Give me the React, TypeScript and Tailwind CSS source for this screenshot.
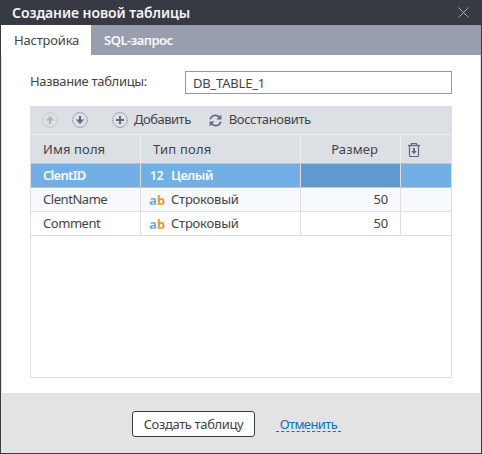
import React from "react";

type RowData = { name: string; type: string; size: string };

const rows: RowData[] = [
  { name: "ClentName", type: "Строковый", size: "50" },
  { name: "Comment", type: "Строковый", size: "50" },
];

function Arrow({ color, down }: { color: string; down?: boolean }) {
  return (
    <svg width="16" height="16" viewBox="0 0 16 16" fill="none" className="shrink-0">
      <circle cx="8" cy="8" r="7.4" stroke={color} strokeDasharray="1 1" />
      <g transform={down ? "rotate(180 8 8)" : undefined}>
        <path d="M8 12V6" stroke={color} strokeWidth="2" />
        <path d="M8 3.8L12 8.5H4Z" fill={color} />
      </g>
    </svg>
  );
}

function Plus() {
  return (
    <svg width="16" height="16" viewBox="0 0 16 16" fill="none" stroke="#5d6a80" className="shrink-0">
      <circle cx="8" cy="8" r="7.4" strokeDasharray="1 1" />
      <path d="M8 4V12M4 8H12" strokeWidth="2" />
    </svg>
  );
}

function Refresh() {
  return (
    <svg width="13" height="13" viewBox="0 0 13 13" fill="none" stroke="#5d6a80" strokeWidth="1.7" className="shrink-0">
      <path d="M1.2 5.2C2.3 1 7.5.3 10.4 3.2" />
      <path d="M12.4 .5V5.5H7.4Z" fill="#5d6a80" stroke="none" />
      <path d="M11.8 7.8C10.7 12 5.5 12.7 2.6 9.8" />
      <path d="M.6 12.5V7.5H5.6Z" fill="#5d6a80" stroke="none" />
    </svg>
  );
}

function Trash() {
  return (
    <svg width="12" height="14" viewBox="0 0 12 14" fill="none" stroke="#5d6a80">
      <path d="M0 2.5H12" strokeWidth="1.4" />
      <path d="M3.5 2V.5H8.5V2M1.5 3V12.5Q1.5 13.5 2.5 13.5H9.5Q10.5 13.5 10.5 12.5V3" strokeWidth="1.2" />
      <path d="M6 5V9" strokeWidth="2" />
      <path d="M3.3 8H8.7L6 11.3Z" fill="#5d6a80" stroke="none" />
    </svg>
  );
}

export default function App() {
  return (
    <div className="flex h-[454px] w-[482px] flex-col whitespace-nowrap border-x border-b border-[#393a44] bg-white font-['Noto_Sans',sans-serif] text-[13px] leading-[18px] text-[#434446]">
      <header className="flex h-[25px] shrink-0 items-center justify-between bg-[#383a43] pl-[11px] pr-[12px] text-[#f4f4f5]">
        <h1 className="text-[14px] font-semibold tracking-[-0.08px]">Создание новой таблицы</h1>
        <svg width="11" height="11" viewBox="0 0 11 11" stroke="#aaa9a7" strokeWidth="1"><path d="M.5.5L10.5 10.5M10.5.5L.5 10.5" /></svg>
      </header>
      <nav className="flex h-[30px] shrink-0 bg-[#999eaf]">
        <span className="flex w-[90px] items-center bg-white pl-[13px] tracking-[-0.2px]">Настройка</span>
        <span className="flex items-center pl-[13px] font-semibold tracking-[-0.5px] text-[#f8f8fa]">SQL-запрос</span>
      </nav>
      <main className="flex h-[339px] shrink-0 flex-col border-x border-b border-[#dfe0e7] px-[28px] pt-[16px]">
        <div className="flex h-[23px] shrink-0">
          <label className="w-[155px] pt-px tracking-[-0.32px]">Название таблицы:</label>
          <div className="flex flex-1 items-center border border-[#999] pl-[7px] pt-px tracking-[-0.2px]">DB_TABLE_1</div>
        </div>
        <section className="mt-[12px] flex h-[272px] flex-col border border-t-0 border-[#dcdfe4]">
          <div className="flex h-[28px] shrink-0 items-center bg-[#dcdfe4] pl-[11px]">
            <Arrow color="#b0b3bb" />
            <span className="ml-[14px] flex"><Arrow color="#5d6a80" down /></span>
            <span className="ml-[24px] flex items-center gap-[6px] tracking-[-0.5px]"><Plus /><span className="pb-[2px]">Добавить</span></span>
            <span className="ml-[18px] flex items-center gap-[7px] tracking-[-0.36px]"><Refresh /><span className="pb-[2px]">Восстановить</span></span>
          </div>
          <div className="flex h-[30px] shrink-0 border-b border-t border-b-[#bcc5ce] border-t-[#eef0f2] bg-[#dcdfe4] pt-px">
            <span className="flex w-[110px] items-center border-r border-[#eef0f2] pb-[2px] pl-[12px] tracking-[0.1px]">Имя поля</span>
            <span className="flex w-[160px] items-center border-r border-[#eef0f2] pb-[2px] pl-[12px] tracking-[0.2px]">Тип поля</span>
            <span className="flex w-[100px] items-center justify-end border-r border-[#eef0f2] pb-[2px] pr-[22px] tracking-[0.1px]">Размер</span>
            <span className="flex flex-1 items-center pl-[7px]"><Trash /></span>
          </div>
          <div className="flex h-[24px] shrink-0 border-b border-[#bcc5ce] bg-[#71afe4] font-semibold text-[#f8fbfe]">
            <span className="flex w-[110px] items-center border-r border-[#dcdfe4] pb-[2px] pl-[12px] tracking-[-0.7px]">ClentID</span>
            <span className="flex w-[160px] items-center border-r border-[#dcdfe4] pb-[2px] pl-[9px] tracking-[-0.5px]"><span className="w-[21px] pt-[3px] text-[12px] tracking-normal">12</span>Целый</span>
            <span className="w-[100px] border-r border-[#dcdfe4] bg-[#6099ce]" />
          </div>
          {rows.map((row) => (
            <div key={row.name} className="flex h-[24px] shrink-0 border-b border-[#dcdfe4] odd:bg-[#f8f9fc] even:bg-white nth-3:bg-[#f8f9fc] nth-4:bg-[#f8f9fc] nth-5:bg-white">
              <span className="flex w-[110px] items-center border-r border-[#dcdfe4] pb-[2px] pl-[12px] tracking-[-0.45px]">{row.name}</span>
              <span className="flex w-[160px] items-center border-r border-[#dcdfe4] pb-[2px] pl-[8px] tracking-[-0.22px]">
                <span className="w-[22px] pt-[2px] font-bold tracking-[0.2px] text-[#68afea]">a<span className="text-[#fa931e]">b</span></span>{row.type}
              </span>
              <span className="flex w-[100px] items-center justify-end border-r border-[#dcdfe4] pb-[2px] pr-[12px] tracking-[-0.2px]">{row.size}</span>
            </div>
          ))}
        </section>
      </main>
      <footer className="flex flex-1 items-start bg-[#e3e3e3] pl-[131px] pt-[17px]">
        <button className="h-[26px] w-[123px] rounded-[3px] border border-[#393a44] bg-white pb-px tracking-[-0.37px]">Создать таблицу</button>
        <a className="ml-[21px] mt-[3px] flex h-[18px] w-[65px] items-center justify-center border-b border-dashed border-[#0875bd] pt-[2px] tracking-[-0.6px] text-[#0875bd]">Отменить</a>
      </footer>
    </div>
  );
}
